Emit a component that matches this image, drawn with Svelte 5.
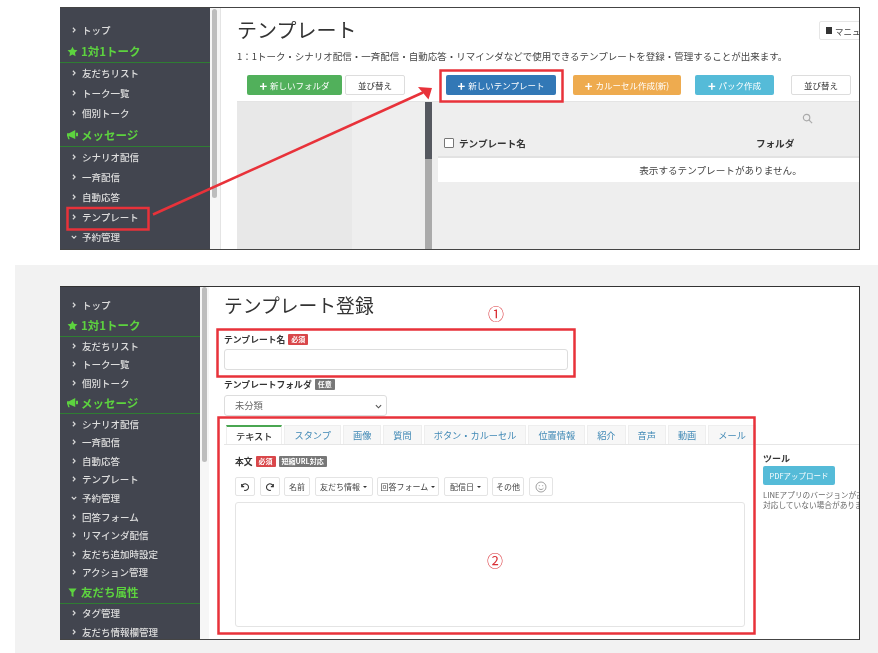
<script>
  const top = [
    { t: 'トップ' }, { h: '1対1トーク', i: 'star' }, { t: '友だちリスト' }, { t: 'トーク一覧' }, { t: '個別トーク' },
    { h: 'メッセージ', i: 'mega' }, { t: 'シナリオ配信' }, { t: '一斉配信' }, { t: '自動応答' }, { t: 'テンプレート' }, { t: '予約管理', open: true }
  ];
  const bottom = [
    { t: 'トップ' }, { h: '1対1トーク', i: 'star' }, { t: '友だちリスト' }, { t: 'トーク一覧' }, { t: '個別トーク' },
    { h: 'メッセージ', i: 'mega' }, { t: 'シナリオ配信' }, { t: '一斉配信' }, { t: '自動応答' }, { t: 'テンプレート' }, { t: '予約管理', open: true },
    { t: '回答フォーム' }, { t: 'リマインダ配信' }, { t: '友だち追加時設定' }, { t: 'アクション管理' },
    { h: '友だち属性', i: 'filter' }, { t: 'タグ管理' }, { t: '友だち情報欄管理' }
  ];
  const tabs = ['テキスト', 'スタンプ', '画像', '質問', 'ボタン・カルーセル', '位置情報', '紹介', '音声', '動画', 'メール'];
  const tools = [
    { t: '名前', w: 26 }, { t: '友だち情報', c: true, w: 58 }, { t: '回答フォーム', c: true, w: 62 }, { t: '配信日', c: true, w: 44 }, { t: 'その他', w: 32 }
  ];
</script>

{#snippet side(items, cls)}
  <nav class="side {cls}">
    {#each items as it}
      {#if it.h}
        <div class="head">
          <svg class="hi" viewBox="0 0 16 16" aria-hidden="true">
            {#if it.i === 'star'}
              <path d="M8 1l2.200 4.600 5 .7-3.600 3.500.9 5L8 12.400 3.500 14.800l.9-5L.8 6.300l5-.7z" />
            {:else if it.i === 'mega'}
              <path d="M0 6h3l9-4.500v13L3 10.500h-.5L4 15H1.800L.5 10.500H0zM13 5.500h3v5h-3z" />
            {:else}
              <path d="M2 2h12L9.500 8v6.500l-3-1.500V8z" />
            {/if}
          </svg>
          {it.h}
        </div>
      {:else}
        <div class="item">
          <svg class="chev" viewBox="0 0 8 8" aria-hidden="true">
            {#if it.open}
              <path d="M1 2.500l3 3 3-3" />
            {:else}
              <path d="M2.500 1l3 3-3 3" />
            {/if}
          </svg>
          {it.t}
        </div>
      {/if}
    {/each}
  </nav>
{/snippet}

<div class="page">
  <section class="shot shot-a">
    {@render side(top, 'sa')}
    <div class="track sa"><span class="thumb"></span></div>
    <main class="main-a">
      <button class="manual"><i></i>マニュ</button>
      <h1>テンプレート</h1>
      <p class="desc">1：1トーク・シナリオ配信・一斉配信・自動応答・リマインダなどで使用できるテンプレートを登録・管理することが出来ます。</p>
      <div class="btnrow">
        <span class="btn green w95"><b>+</b>新しいフォルダ</span>
        <span class="btn plain w60">並び替え</span>
        <span class="btn blue w110"><b>+</b>新しいテンプレート</span>
        <span class="btn orange w108"><b>+</b>カルーセル作成(新)</span>
        <span class="btn cyan w79"><b>+</b>パック作成</span>
        <span class="btn plain w60">並び替え</span>
      </div>
      <div class="panes">
        <div class="p1"></div>
        <div class="p2"></div>
        <div class="bar"><span></span></div>
        <div class="p3">
          <svg class="search" viewBox="0 0 12 12" aria-hidden="true"><circle cx="5" cy="5" r="3.500" /><path d="M7.500 7.500L11 11" /></svg>
          <div class="thead">
            <span class="check"></span>
            <span class="th1">テンプレート名</span>
            <span class="th2">フォルダ</span>
          </div>
          <div class="empty">表示するテンプレートがありません。</div>
        </div>
      </div>
    </main>
  </section>

  <section class="band">
    <div class="shot shot-b">
      {@render side(bottom, 'sb')}
      <div class="track sb"><span class="thumb"></span></div>
      <main class="main-b">
        <h2>テンプレート登録</h2>
        <div class="label first">テンプレート名<span class="tag red">必須</span></div>
        <div class="input"></div>
        <div class="label second">テンプレートフォルダ<span class="tag gray">任意</span></div>
        <div class="select">未分類
          <svg viewBox="0 0 8 8" aria-hidden="true"><path d="M1 2.500l3 3 3-3" /></svg>
        </div>
        <div class="tabline">
          {#each tabs as t, i}
            <span class="tab" class:active={i === 0}>{t}</span>
          {/each}
        </div>
        <div class="below">
          <div class="editor">
            <div class="label body">本文<span class="tag red">必須</span><span class="tag gray">短縮URL対応</span></div>
            <div class="tools">
              <span class="tb ic"><svg viewBox="0 0 12 12" aria-hidden="true"><path d="M2 2.500v3h3M2.300 5.300A4 4 0 1 1 5 10" /></svg></span>
              <span class="tb ic"><svg viewBox="0 0 12 12" aria-hidden="true"><path d="M10 2.500v3H7M9.700 5.300A4 4 0 1 0 7 10" /></svg></span>
              {#each tools as x}
                <span class="tb" style:width="{x.w}px">{x.t}{#if x.c}<em></em>{/if}</span>
              {/each}
              <span class="tb ic smile"><svg viewBox="0 0 12 12" aria-hidden="true"><circle cx="6" cy="6" r="5" /><path d="M3.500 7.200c1.200 1.800 3.800 1.800 5 0M4.300 4.200v1M7.700 4.200v1" /></svg></span>
            </div>
            <div class="area"></div>
          </div>
          <aside class="toolside">
            <strong>ツール</strong>
            <span class="pdf">PDFアップロード</span>
            <p>LINEアプリのバージョンが古い<br />対応していない場合がありま</p>
          </aside>
        </div>
      </main>
    </div>
  </section>

  <svg class="marks" viewBox="0 0 878 653" aria-hidden="true">
    <rect x="67.500" y="208" width="81" height="21.500" />
    <rect x="440.500" y="70.500" width="122" height="31" />
    <rect x="217.500" y="329.500" width="357" height="47" />
    <rect x="218.500" y="417.500" width="536" height="216" />
    <path d="M153 214.500L423 92.500" />
    <path class="fill" d="M432 88L418 87L428.500 99.500z" />
  </svg>
  <span class="num n1">①</span>
  <span class="num n2">②</span>
</div>

<style>
  :global(body) { margin: 0; background: #fff; }
  .page {
    position: relative;
    width: 878px;
    height: 653px;
    overflow: hidden;
    background: #fff;
    color: #333;
    font-family: "Noto Sans CJK JP", "Noto Sans", sans-serif;
    filter: blur(.35px);
  }
  .shot {
    box-sizing: border-box;
    width: 800px;
    display: flex;
    overflow: hidden;
    background: #fff;
    border: 1px solid #444;
  }
  .shot-a { height: 243px; margin: 7px 0 0 60px; border-left: 0; }
  .band { height: 388px; margin: 15px 0 0 15px; padding: 21px 0 0 45px; background: #f2f2f2; box-sizing: border-box; }
  .shot-b { height: 354px; border-left: 0; border-right-color: #333; border-top-color: #333; }

  .side { flex: none; background: #42454f; color: #ddd; font-size: 9.500px; font-weight: 500; box-sizing: border-box; }
  .side.sa { width: 150px; padding-top: 12px; --row: 20.150px; --head: 23px; }
  .side.sb { width: 140px; padding-top: 9px; --row: 18.600px; --head: 22px; }
  .item { height: var(--row); display: flex; align-items: center; padding-left: 11px; white-space: nowrap; }
  .chev { width: 6px; height: 6px; margin-right: 5px; fill: none; stroke: #ddd; stroke-width: 1.500; }
  .head {
    height: var(--head);
    box-sizing: border-box;
    display: flex;
    align-items: center;
    padding-left: 7px;
    border-bottom: 1px solid #2f7d33;
    color: #5dd33f;
    font-size: 11.500px;
    font-weight: 700;
    white-space: nowrap;
  }
  .hi { width: 11px; height: 11px; margin-right: 3px; fill: #5dd33f; }

  .track { flex: none; background: #f6f6f6; }
  .track.sa { width: 10px; }
  .track.sb { width: 9px; }
  .thumb { display: block; background: #bdbdbd; border-radius: 3px; }
  .sa .thumb { width: 5px; height: 189px; margin: 1px 0 0 2px; }
  .sb .thumb { width: 5px; height: 175px; margin: 0 0 0 2px; }

  .main-a { flex: 1; min-width: 0; position: relative; border-left: 1px solid #e4e4e4; }
  .main-a h1 { margin: 9px 0 0 16px; font-size: 20px; font-weight: 400; line-height: 26px; color: #333; }
  .desc { margin: 6px 0 0 16px; font-size: 9.500px; line-height: 15px; white-space: nowrap; color: #444; }
  .manual {
    position: absolute;
    left: 598px;
    top: 13px;
    width: 50px;
    height: 19px;
    padding: 0 0 0 6px;
    display: flex;
    align-items: center;
    white-space: nowrap;
    background: #fff;
    border: 1px solid #e6e6e6;
    border-radius: 2px;
    font: 8.500px "Noto Sans CJK JP", sans-serif;
    color: #444;
  }
  .manual i { width: 6px; height: 7px; background: #333; margin-right: 3px; flex: none; }

  .btnrow { display: flex; margin: 11px 0 0 26px; height: 20px; }
  .btn {
    height: 20px;
    box-sizing: border-box;
    display: flex;
    align-items: center;
    justify-content: center;
    border-radius: 2px;
    font-size: 8.500px;
    color: #fff;
    white-space: nowrap;
  }
  .btn b { font-size: 13px; line-height: 1; margin-right: 3px; font-weight: 700; }
  .w95 { width: 95px; margin-right: 3px; }
  .w60 { width: 60px; }
  .w110 { width: 110px; margin-left: 41px; margin-right: 17px; }
  .w108 { width: 108px; margin-right: 14px; }
  .w79 { width: 79px; margin-right: 17px; }
  .green { background: #51b05b; }
  .blue { background: #3278b6; }
  .orange { background: #eeab4f; }
  .cyan { background: #55bbd8; }
  .plain { background: #fff; border: 1px solid #ddd; color: #333; }

  .panes { display: flex; margin: 6px 0 0 16px; height: 147px; background: #eee; border-top: 1px solid #e4e4e4; }
  .p1 { width: 115px; background: #e8e8e8; }
  .p2 { width: 73px; background: #eee; }
  .bar { width: 7px; background: #aaa; }
  .bar span { display: block; height: 57px; background: #55585f; }
  .p3 { flex: 1; position: relative; min-width: 0; padding-left: 6px; }
  .search { position: absolute; left: 370px; top: 11px; width: 11px; height: 11px; fill: none; stroke: #aaa; stroke-width: 1.300; }
  .thead {
    display: flex;
    align-items: center;
    height: 56px;
    box-sizing: border-box;
    padding-top: 28px;
    font-size: 9.600px;
    font-weight: 700;
    color: #333;
    border-bottom: 2px solid #e2e2e2;
    white-space: nowrap;
  }
  .check { width: 8px; height: 8px; border: 1px solid #777; border-radius: 1px; background: #fff; margin-left: 6px; margin-right: 5px; }
  .th2 { margin-left: 230px; }
  .empty { height: 24px; background: #fff; display: flex; align-items: center; justify-content: center; font-size: 9.600px; color: #444; box-sizing: border-box; padding-left: 144px; }

  .main-b { flex: 1; min-width: 0; padding-left: 15px; }
  .main-b h2 { margin: 4px 0 0; font-size: 18.800px; font-weight: 400; line-height: 28px; color: #333; }
  .label { display: flex; align-items: center; font-size: 8.800px; font-weight: 700; color: #333; white-space: nowrap; }
  .label.first { margin-top: 13px; height: 14px; }
  .label.second { margin-top: 7px; height: 14px; }
  .label.body { margin-top: 0; height: 14px; }
  .tag { display: inline-block; margin-left: 3px; padding: 0 3px; font-size: 7px; line-height: 11px; border-radius: 1px; color: #fff; }
  .tag.red { background: #d9474a; }
  .tag.gray { background: #777; }
  .input { width: 344px; height: 21px; box-sizing: border-box; margin-top: 3px; border: 1px solid #ddd; border-radius: 3px; background: #fff; }
  .select {
    position: relative;
    width: 163px;
    height: 21px;
    box-sizing: border-box;
    margin-top: 4px;
    padding-left: 10px;
    border: 1px solid #ddd;
    border-radius: 3px;
    font-size: 9.300px;
    line-height: 19px;
    color: #666;
  }
  .select svg { position: absolute; right: 4px; top: 7px; width: 7px; height: 7px; fill: none; stroke: #555; stroke-width: 1.300; }

  .tabline { display: flex; height: 20px; margin: 9px 0 0 0; padding-left: 2px; border-bottom: 1px solid #e6e6e6; box-sizing: border-box; gap: 2px; overflow: hidden; }
  .tab {
    flex: none;
    height: 19px;
    padding: 0 9px;
    display: flex;
    align-items: center;
    font-size: 9.200px;
    color: #3f88b5;
    background: #f7f7f7;
    border: 1px solid #eee;
    border-bottom: 0;
    box-sizing: border-box;
    white-space: nowrap;
  }
  .tab.active { height: 20px; background: #fff; color: #333; font-weight: 500; border-top: 2px solid #4aa651; }

  .below { display: flex; }
  .editor { width: 538px; flex: none; padding: 9px 0 0 11px; box-sizing: border-box; }
  .tools { display: flex; gap: 4.500px; margin-top: 9px; height: 19px; }
  .tb {
    height: 19px;
    box-sizing: border-box;
    display: flex;
    align-items: center;
    justify-content: center;
    border: 1px solid #e4e4e4;
    border-radius: 2px;
    font-size: 8px;
    color: #444;
    white-space: nowrap;
  }
  .tb em { width: 0; height: 0; margin-left: 3px; border: 2.500px solid transparent; border-top-color: #333; border-bottom: 0; }
  .tb.ic { width: 20px; }
  .tb svg { width: 10px; height: 10px; fill: none; stroke: #333; stroke-width: 1.300; }
  .tb.smile { width: 24px; }
  .tb.smile svg { width: 12px; height: 12px; stroke: #888; stroke-width: .8; }
  .area { width: 510px; height: 125px; box-sizing: border-box; margin-top: 6px; border: 1px solid #e4e4e4; border-radius: 3px; }
  .toolside { flex: 1; min-width: 0; overflow: hidden; padding: 8px 0 0 1px; white-space: nowrap; }
  .toolside strong { display: block; font-size: 9px; line-height: 12px; color: #333; }
  .pdf { display: block; width: 72px; height: 19px; margin-top: 1px; background: #55bbd8; border-radius: 2px; color: #fff; font-size: 7.500px; line-height: 19px; text-align: center; }
  .toolside p { margin: 5px 0 0; font-size: 7.700px; line-height: 10px; color: #666; }

  .marks { position: absolute; inset: 0; width: 878px; height: 653px; pointer-events: none; }
  .marks rect, .marks path { fill: none; stroke: #e8323a; stroke-width: 2.500; }
  .marks path.fill { fill: #e8323a; stroke: none; }
  .num { position: absolute; font-size: 16px; line-height: 18px; color: #d92f35; }
  .n1 { left: 488px; top: 304px; }
  .n2 { left: 487px; top: 551px; }
</style>
